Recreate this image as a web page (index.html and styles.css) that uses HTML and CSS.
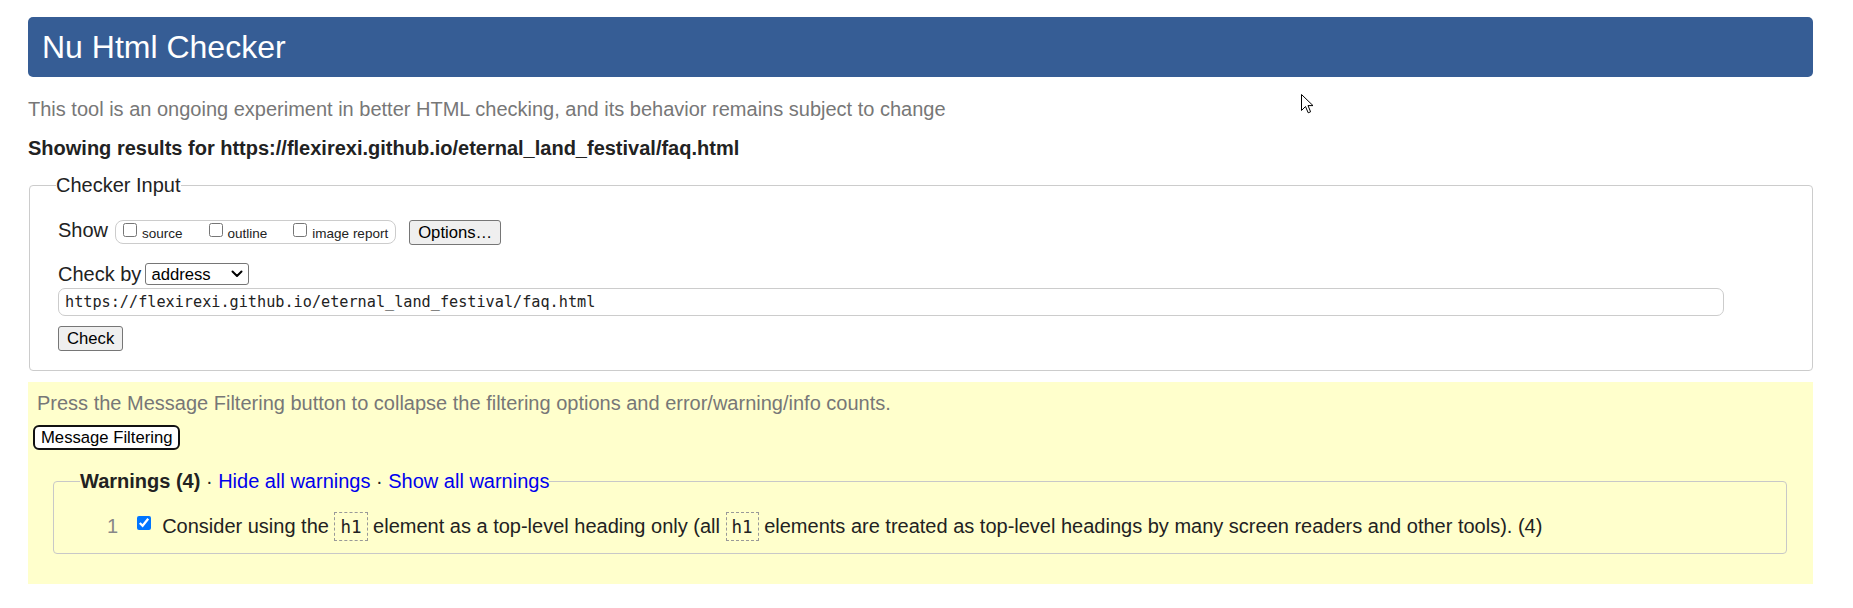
FILE: index.html
```html
<!DOCTYPE html>
<html lang="en">
<head>
<meta charset="utf-8">
<title>Nu Html Checker</title>
<link rel="stylesheet" href="styles.css">
</head>
<body>
<div class="page">
  <h1 class="title">Nu Html Checker</h1>
  <p class="intro">This tool is an ongoing experiment in better HTML checking, and its behavior remains subject to change</p>
  <p class="results">Showing results for https://flexirexi.github.io/eternal_land_festival/faq.html</p>
  <form class="checker">
    <fieldset class="input-fs">
      <legend class="fs-legend">Checker Input</legend>
      <div class="fs-body">
        <div class="show-row">
          <span class="row-label show-label">Show</span>
          <span class="show-group">
            <label class="opt"><input type="checkbox" class="cb"><span class="opt-text">source</span></label>
            <label class="opt"><input type="checkbox" class="cb"><span class="opt-text">outline</span></label>
            <label class="opt"><input type="checkbox" class="cb"><span class="opt-text">image report</span></label>
          </span>
          <button type="button" class="btn options">Options…</button>
        </div>
        <div class="by-row">
          <span class="row-label">Check by</span>
          <span class="select-wrap">
            <select class="select"><option>address</option></select>
            <svg class="chev" viewBox="0 0 12 8" aria-hidden="true"><path d="M1.5 1.5 L6 6 L10.5 1.5" fill="none" stroke="#000" stroke-width="2" stroke-linecap="round" stroke-linejoin="round"/></svg>
          </span>
        </div>
        <input class="url" type="text" value="https://flexirexi.github.io/eternal_land_festival/faq.html">
        <button type="button" class="btn check">Check</button>
      </div>
    </fieldset>
  </form>
  <section class="filters">
    <p class="filter-note">Press the Message Filtering button to collapse the filtering options and error/warning/info counts.</p>
    <button type="button" class="btn filter-btn">Message Filtering</button>
    <fieldset class="warn-fs">
      <legend class="warn-legend"><strong>Warnings (4)</strong> · <a href="#">Hide all warnings</a> · <a href="#">Show all warnings</a></legend>
      <div class="warn-row">
        <span class="warn-num">1</span>
        <input type="checkbox" class="cb-warn" checked>
        <p class="warn-text">Consider using the <code class="code">h1</code> element as a top-level heading only (all <code class="code">h1</code> elements are treated as top-level headings by many screen readers and other tools). (4)</p>
      </div>
    </fieldset>
  </section>
</div>
<svg class="cursor" viewBox="0 0 13 20" aria-hidden="true"><path d="M0.5 0.5 L0.5 16.5 L4.5 12.5 L7.2 18.8 L9.6 17.8 L7 11.6 L12 11.6 Z" fill="#fff" stroke="#000" stroke-width="1" stroke-linejoin="miter"/></svg>
</body>
</html>
```

FILE: styles.css
```css
html, body {
  margin: 0;
  padding: 0;
  background: #fff;
}

body {
  font-family: "Liberation Sans", Arial, Helvetica, sans-serif;
  font-size: 20px;
  line-height: 23px;
  color: #222;
}

.page {
  padding: 17px 40px 0 28px;
}

.title {
  margin: 0;
  padding: 12px 14px 11px;
  background: #365d95;
  color: #fff;
  font-size: 32px;
  line-height: 37px;
  font-weight: normal;
  border-radius: 5px;
}

.intro {
  margin: 21px 0 0 0;
  color: #777;
}

.results {
  margin: 16px 0 0 0;
  font-weight: bold;
}

.checker {
  margin: 14px 0 0 1px;
}

.input-fs {
  margin: 0;
  padding: 0 0 0 25px;
  border: 1px solid #ccc;
  border-radius: 4px;
  min-width: 0;
}

.fs-legend {
  padding: 0;
  margin-left: 1px;
  font-size: 20px;
  line-height: 23px;
  color: #222;
}

.fs-body {
  padding: 22px 0 19px 3px;
}

.show-row {
  display: flex;
  align-items: center;
  height: 26px;
}

.row-label {
  font-size: 20px;
  line-height: 23px;
}

.show-label {
  margin-bottom: 3px;
}

.show-group {
  display: flex;
  align-items: center;
  box-sizing: border-box;
  height: 24px;
  margin-left: 7px;
  padding: 0 7px 0 7px;
  border: 1px solid #ccc;
  border-radius: 8px;
}

.opt {
  display: flex;
  align-items: center;
  font-size: 13.5px;
  line-height: 16px;
  color: #222;
}

.opt + .opt {
  margin-left: 26px;
}

.cb {
  width: 14px;
  height: 14px;
  margin: 0 5px 5px 0;
}

.opt-text {
  margin-top: 3px;
}

.btn {
  font-family: "Liberation Sans", Arial, Helvetica, sans-serif;
  font-size: 16.67px;
  line-height: 23px;
  color: #000;
  background: #efefef;
  border: 1px solid #767676;
  border-radius: 3px;
  height: 25px;
  padding: 0 8px;
  box-sizing: border-box;
  margin: 0;
}

.options {
  margin-left: 13px;
}

.by-row {
  display: flex;
  align-items: center;
  height: 22px;
  margin-top: 18px;
}

.select-wrap {
  position: relative;
  display: block;
  margin-left: 4px;
}

.select {
  -webkit-appearance: none;
  appearance: none;
  display: block;
  box-sizing: border-box;
  width: 104px;
  height: 22px;
  margin: 0;
  padding: 0 0 0 5px;
  border: 1px solid #767676;
  border-radius: 3px;
  background: #fff;
  color: #000;
  font-family: "Liberation Sans", Arial, Helvetica, sans-serif;
  font-size: 16.67px;
}

.chev {
  position: absolute;
  right: 6px;
  top: 7px;
  width: 12px;
  height: 8px;
  pointer-events: none;
}

.url {
  display: block;
  box-sizing: border-box;
  width: calc(100% - 88px);
  height: 28px;
  margin: 3px 0 0 0;
  padding: 0 6px;
  border: 1px solid #ccc;
  border-radius: 7px;
  background: #fff;
  color: #222;
  font-family: "DejaVu Sans Mono", "Liberation Mono", monospace;
  font-size: 15.2px;
}

.check {
  display: block;
  margin-top: 10px;
}

.filters {
  margin: 11px 0 0 0;
  padding: 10px 0 30px 0;
  background: #ffffcc;
}

.filter-note {
  margin: 0 0 0 9px;
  color: #777;
}

.filter-btn {
  display: block;
  margin: 10px 0 0 5px;
  padding: 0 6px;
  background: #fff;
  border: 2px solid #111;
  border-radius: 6px;
  line-height: 21px;
}

.warn-fs {
  margin: 20px 26px 0 25px;
  padding: 0 0 0 25px;
  border: 1px solid #c8c8c8;
  border-radius: 4px;
  min-width: 0;
}

.warn-legend {
  padding: 0;
  margin-left: 1px;
  line-height: 23px;
  color: #222;
}

.warn-legend strong {
  color: #222;
}

.warn-legend a {
  color: #0000ee;
  text-decoration: none;
}

.warn-row {
  display: flex;
  align-items: center;
  padding: 19px 0 12px 28px;
}

.warn-num {
  color: #888;
}

.cb-warn {
  width: 14px;
  height: 14px;
  margin: 0 0 8px 19px;
  accent-color: #0075ff;
}

.warn-text {
  margin: 0 0 0 11px;
  color: #222;
}

.code {
  display: inline-block;
  font-family: "DejaVu Sans Mono", "Liberation Mono", monospace;
  font-size: 17.5px;
  line-height: 21.4px;
  padding: 4px 5px 2px;
  border: 1px dashed #999;
  color: #222;
}

.cursor {
  position: absolute;
  left: 1301px;
  top: 94px;
  width: 13px;
  height: 20px;
}
```
